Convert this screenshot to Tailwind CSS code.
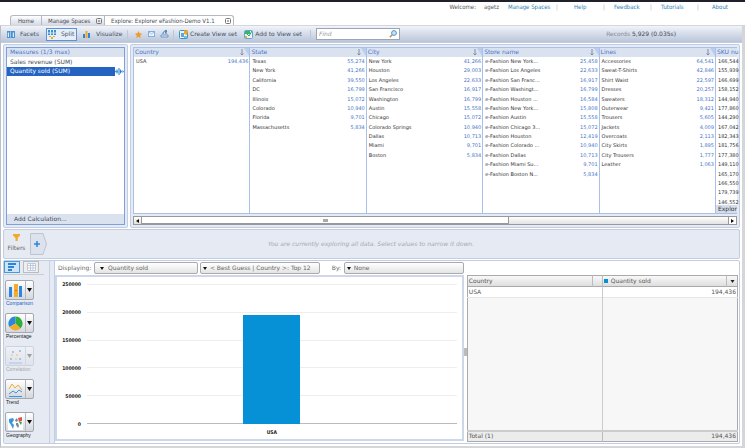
<!DOCTYPE html>
<html lang="en">
<head>
<meta charset="utf-8">
<title>Explorer eFashion-Demo V1.1</title>
<script src="https://cdn.jsdelivr.net/npm/@tailwindcss/browser@4"></script>
</head>
<body class="flex min-h-screen flex-col bg-white font-['DejaVu_Sans',Verdana,sans-serif] text-[6px] leading-[8px] text-[#444a55]">
<header class="border-t-2 border-[#20202a] font-['DejaVu_Sans_Condensed','DejaVu_Sans',sans-serif]">
  <nav class="flex h-[13px] items-start justify-end pt-[1px] pr-[16px] text-[#2a82b4]">
    <span class="mr-[8px] text-[#555]">Welcome:</span><span class="mr-[9px] text-[#555]">agetz</span>
    <a href="#" class="w-[48px]">Manage Spaces</a><span class="w-[18px] text-[#aaa]">|</span>
    <a href="#" class="w-[29px]">Help</a><span class="w-[11px] text-[#aaa]">|</span>
    <a href="#" class="w-[36px]">Feedback</a><span class="w-[11px] text-[#aaa]">|</span>
    <a href="#" class="w-[36px]">Tutorials</a><span class="w-[15px] text-[#aaa]">|</span>
    <a href="#" class="w-[17px]">About</a>
  </nav>
  <div class="flex h-[10px] items-stretch pl-[10px]" role="tablist">
    <button class="w-[32px] rounded-tl-[3px] border border-b-0 border-[#b4b8c0] bg-linear-to-b from-white to-[#d5dae4]">Home</button>
    <button class="flex w-[63px] items-center justify-between border-t border-r border-[#b4b8c0] bg-linear-to-b from-white to-[#d5dae4] pr-[2px] pl-[6px]">Manage Spaces
      <svg class="h-[6px] w-[6px]" viewBox="0 0 6 6" fill="none" stroke="#777"><rect x=".5" y=".5" width="5" height="5" rx="1"/><path d="M2 2l2 2M4 2l-2 2" stroke-width=".6"/></svg></button>
    <button class="flex w-[129px] items-center justify-between rounded-tr-[3px] border-t border-r border-[#b4b8c0] bg-white pr-[2px] pl-[6px] whitespace-nowrap">Explore: Explorer eFashion-Demo V1.1
      <svg class="h-[6px] w-[6px]" viewBox="0 0 6 6" fill="none" stroke="#777"><rect x=".5" y=".5" width="5" height="5" rx="1"/><path d="M2 2l2 2M4 2l-2 2" stroke-width=".6"/></svg></button>
  </div>
</header>
<main class="flex flex-1 flex-col border-t border-r-[3px] border-b-2 border-l border-[#d4d6da] border-l-[#b9bec8]">
  <div class="flex h-[17px] items-center border-b border-[#c3cbda] bg-linear-to-b from-[#f1f4f9] to-[#b9c5da] pl-[6px] text-[#46505f]">
    <button class="flex w-[39px] items-center gap-[5px]"><svg class="h-[7px] w-[8px]" viewBox="0 0 8 7"><path d="M0 0h8v7H0z" fill="#4a92cc"/><path d="M.8 1.500h1.200V6H.8zM3 .5h.6v6H3zM5.800 1.500H7V6H5.800z" fill="#dcecf8"/></svg>Facets</button>
    <button class="flex h-[13px] w-[31px] items-center gap-[5px] border border-[#5c93d6] bg-[#e6eefa] pl-[1px]"><svg class="h-[9px] w-[8px] shrink-0" viewBox="0 0 8 9"><path d="M0 0h2v5H0zM3 0h2v5H3zM6 0h2v5H6z" fill="#3a8fd0"/><path d="M0 2.500h8v1H0z" fill="#cfe4f5"/><path d="M1 6h2v1H1zM5 6h2v1H5zM3 7h2v2H3z" fill="#f0a830"/></svg>Split</button>
    <button class="flex w-[45px] items-center gap-[6px] pl-[6px]"><svg class="h-[7px] w-[7px] shrink-0" viewBox="0 0 7 7"><path d="M0 3h2v4H0zM5 2h2v5H5z" fill="#2b86d9"/><path d="M2.500 0h2v7h-2z" fill="#f5a623"/></svg>Visualize</button>
    <span class="ml-[5px] h-[9px] w-[1px] bg-[#c0c6d2]"></span>
    <button class="ml-[7px]" aria-label="Favorite"><svg class="h-[7px] w-[7px]" viewBox="0 0 10 10"><path d="M5 0l1.500 3.300L10 3.800 7.500 6.300 8.100 10 5 8.200 1.900 10l.6-3.700L0 3.800l3.500-.5z" fill="#f29a22"/></svg></button>
    <button class="ml-[6px]" aria-label="Mail"><svg class="h-[6px] w-[7px]" viewBox="0 0 7 6"><rect x=".5" y=".5" width="6" height="5" fill="#eef5fd" stroke="#80aee0"/><path d="M1 1l2.500 2L6 1" stroke="#80aee0" fill="none" stroke-width=".8"/></svg></button>
    <button class="ml-[5px]" aria-label="Export"><svg class="h-[8px] w-[9px]" viewBox="0 0 9 8"><path d="M1 5h7v2H1z" fill="#dce9f8" stroke="#5d87bd" stroke-width=".8"/><path d="M3 4c0-2 1-3 3-3M5 0l2 1-2 1.500M6 2v2" stroke="#3873b5" fill="none"/></svg></button>
    <span class="ml-[4px] h-[9px] w-[1px] bg-[#c0c6d2]"></span>
    <button class="ml-[5px] flex items-center gap-[2px]"><svg class="h-[9px] w-[9px]" viewBox="0 0 9 9"><rect x=".5" y=".5" width="8" height="8" rx="1" fill="#e8f5fc" stroke="#3d91c5"/><path d="M2 3h3v4H2z" fill="#58a9d8"/><path d="M5 0l4 1-1 4-3-1z" fill="#f6a623"/><path d="M5 6h3v2H5z" fill="#6fc3dc"/></svg>Create View set</button>
    <button class="ml-[7px] flex items-center gap-[2px]"><svg class="h-[9px] w-[9px]" viewBox="0 0 9 9"><rect x=".5" y=".5" width="8" height="8" rx="1" fill="#e8f5fc" stroke="#5fa6cf"/><path d="M1 1h5v3H1z" fill="#3bb36a"/><path d="M3 4l2 2 3-5" stroke="#2fa35a" fill="none"/><path d="M1 6h2v2H1z" fill="#f6a623"/></svg>Add to View set</button>
    <span class="ml-[8px] h-[9px] w-[1px] bg-[#c0c6d2]"></span>
    <label class="ml-[5px] flex h-[12px] w-[84px] items-center border border-[#9aa5b5] bg-white px-[2px]">
      <input aria-label="Find" placeholder="Find" class="min-w-0 flex-1 italic outline-none placeholder:text-[#999]">
      <svg class="h-[8px] w-[8px]" viewBox="0 0 8 8"><circle cx="5" cy="3" r="2.400" fill="#c6e4fa" stroke="#4a94d2"/><path d="M3.200 4.800L.8 7.200" stroke="#c89047" stroke-width="1.500"/></svg>
    </label>
    <span class="mr-[66px] ml-auto text-[#858b96]">Records <span class="text-[#3f4550]">5,929 (0.035s)</span></span>
  </div>
  <div class="flex flex-1 flex-col gap-[1px] px-[2px] pt-[1px] pb-[2px]">
    <div class="flex h-[184px] gap-[2px]">
      <section class="w-[125px] shrink-0 rounded-[2px] border border-[#c1cde3] bg-[#e6eaf3] p-[2px]">
        <div class="flex h-full flex-col border border-[#7f9fdc] bg-white">
          <h2 class="h-[9px] bg-[#dae2f0] pl-[3px] leading-[7px] text-[#4876c8]">Measures (1/3 max)</h2>
          <button class="h-[9px] pl-[3px] text-left">Sales revenue (SUM)</button>
          <div class="flex h-[10px] items-center"><button class="h-[9px] flex-1 bg-[#2463c2] pl-[3px] text-left text-white">Quantity sold (SUM)</button>
            <svg class="h-[7px] w-[9px]" viewBox="0 0 9 7"><path d="M0 3.500h3M2 1.500v4M4 0v7" stroke="#4a9ad8" stroke-width="1.300"/><path d="M5 1l2 2.500L5 6zM7.500 2L9 3.500 7.500 5z" fill="#2f7cc8"/></svg></div>
          <button class="mt-auto h-[10px] bg-[#dae2f0] pl-[7px] text-left">Add Calculation...</button>
        </div>
      </section>
      <section class="flex min-w-0 flex-1 flex-col rounded-[2px] border border-[#c1cde3] bg-[#e6eaf3] px-[2px] pt-[2px] pb-[2px]">
        <div id="facets" class="grid h-[167px] grid-cols-[repeat(5,minmax(0,1fr))_22px] border-t border-b border-[#a9c0ea] bg-white"></div>
        <div class="mt-auto flex h-[9px] items-stretch border border-[#999] bg-linear-to-b from-white to-[#e2e2e2]">
          <button class="flex w-[8px] items-center justify-center border-r border-[#999]" aria-label="Scroll left"><svg class="h-[4px] w-[3px]" viewBox="0 0 3 4"><path d="M3 0v4L0 2z" fill="#111"/></svg></button>
          <div class="flex w-[61%] items-center justify-center border-r border-b border-[#999] bg-white"><span class="h-[3px] w-[5px] bg-[#aaa]"></span></div>
          <button class="ml-auto flex w-[8px] items-center justify-center border-l border-[#999] bg-white" aria-label="Scroll right"><svg class="h-[4px] w-[3px]" viewBox="0 0 3 4"><path d="M0 0v4l3-2z" fill="#111"/></svg></button>
        </div>
      </section>
    </div>
    <section class="flex h-[30px] items-center rounded-[2px] border border-[#c1cde3] bg-[#e6eaf3]">
      <div class="flex w-[25px] flex-col items-center gap-[3px] pb-[2px]"><svg class="h-[7px] w-[7px]" viewBox="0 0 7 7"><path d="M0 0h7v1.500L4.700 4v3H2.500V4L0 1.500z" fill="#f0ab2c"/></svg><span class="text-[#666]">Filters</span></div>
      <button class="ml-[1px] h-[22px] w-[17px]" aria-label="Add filter"><svg class="h-[22px] w-[17px]" viewBox="0 0 17 22"><path d="M.5.5H13L16.500 11 13 21.500H.5z" fill="#dde2ec" stroke="#bcc4d2"/><path d="M4 11h6M7 8v6" stroke="#2b85d8" stroke-width="1.500"/></svg></button>
      <p class="flex-1 pr-[44px] text-center text-[#a5a9b3] italic">You are currently exploring all data. Select values to narrow it down.</p>
    </section>
    <section class="flex flex-1 rounded-[2px] border border-[#c1cde3]">
      <aside class="flex w-[51px] shrink-0 border-r border-[#c1cde3] bg-[#e6eaf3]">
        <div class="w-[46px] border-r border-[#c9d0df]">
          <div class="mr-[5px] flex h-[14px] gap-[3px] border-b border-[#c9ccd4]">
            <button class="flex h-[12px] w-[16px] items-center justify-center border border-[#4a9ad8] bg-[#cfe5f7]" aria-label="Chart view"><svg class="h-[8px] w-[8px]" viewBox="0 0 8 8"><path d="M0 0h8v2H0zM0 3h6v2H0zM0 6h4v2H0z" fill="#2b86d9"/></svg></button>
            <button class="flex h-[12px] w-[16px] items-center justify-center border border-[#bbb] bg-[#eee]" aria-label="Table view"><svg class="h-[8px] w-[9px]" viewBox="0 0 9 8" fill="#fff" stroke="#a9bad4"><path d="M.5.5h8v7h-8zM.5 2.500h8M3.500.5v7M6 .5v7M.5 5h8" stroke-width=".7"/></svg></button>
          </div>
          <div id="kinds" class="flex flex-col gap-[4px] pt-[5px] pl-[1px] font-['Liberation_Sans_Narrow','Liberation_Sans',Arial,sans-serif] text-[5px] leading-[7px]"></div>
        </div>
      </aside>
      <div class="flex min-w-0 flex-[410] flex-col">
        <div class="flex h-[14px] items-center pl-[3px] text-[#666]">
          <label for="measure" class="w-[36px]">Displaying:</label>
          <div class="relative flex-[104]"><select id="measure" class="h-[12px] w-full appearance-none rounded-[2px] border border-[#aaa] bg-linear-to-b from-white to-[#e4e4e4] pl-[13px]"><option>Quantity sold</option></select><svg class="pointer-events-none absolute top-[5px] left-[6px] h-[3px] w-[4px]" viewBox="0 0 4 3"><path d="M0 0h4L2 3z" fill="#111"/></svg></div>
          <div class="relative ml-[2px] flex-[120]"><select aria-label="Dimension" class="h-[12px] w-full appearance-none rounded-[2px] border border-[#aaa] bg-linear-to-b from-white to-[#e4e4e4] pl-[9px]"><option>&lt; Best Guess | Country &gt;: Top 12</option></select><svg class="pointer-events-none absolute top-[5px] left-[3px] h-[3px] w-[4px]" viewBox="0 0 4 3"><path d="M0 0h4L2 3z" fill="#111"/></svg></div>
          <label for="by" class="w-[24px] pl-[12px]">By:</label>
          <div class="relative flex-[120]"><select id="by" class="h-[12px] w-full appearance-none rounded-[2px] border border-[#aaa] bg-linear-to-b from-white to-[#e4e4e4] pl-[9px]"><option>None</option></select><svg class="pointer-events-none absolute top-[5px] left-[3px] h-[3px] w-[4px]" viewBox="0 0 4 3"><path d="M0 0h4L2 3z" fill="#111"/></svg></div>
        </div>
        <div class="mb-[2px] flex flex-1 border-2 border-[#ccd7ea] pt-[3px] pr-[5px] pb-[3px] pl-[3px] font-['DejaVu_Sans_Condensed','DejaVu_Sans',sans-serif] text-[5px] font-bold text-[#222]">
          <div class="flex w-[27px] flex-col justify-between pr-[6px] pb-[8px] text-right">
            <span>250000</span><span>200000</span><span>150000</span><span>100000</span><span>50000</span><span>0</span>
          </div>
          <div class="flex flex-1 flex-col">
            <div class="relative my-[4px] flex flex-1 justify-center">
              <div class="absolute inset-0 flex flex-col justify-between"><i class="h-[1px] bg-[#eee]"></i><i class="h-[1px] bg-[#eee]"></i><i class="h-[1px] bg-[#eee]"></i><i class="h-[1px] bg-[#eee]"></i><i class="h-[1px] bg-[#eee]"></i><i class="h-[1px] bg-[#bbb]"></i></div>
              <div class="relative w-[57px] self-end bg-[#0690d6]" style="height:77.8%"></div>
            </div>
            <div class="h-[8px] text-center">USA</div>
          </div>
        </div>
      </div>
      <div class="flex w-[3px] items-center"><span class="h-[8px] w-[3px] bg-[#bbb]"></span></div>
      <div class="flex min-w-0 flex-[272] pt-[14px] pr-[1px] pb-[1px]">
        <table class="w-full table-fixed border-collapse border border-[#aaa] bg-[#f7f7f7] text-[#555]">
          <colgroup><col><col class="w-[10px]"><col class="w-[46%]"><col class="w-[11px]"></colgroup>
          <thead><tr class="h-[11px] border-b border-[#aaa] bg-linear-to-b from-[#f9f9f9] to-[#dedede] text-left">
            <th class="border-r border-[#bbb] pl-[1px] font-normal">Country</th><th class="border-r border-[#bbb]"></th>
            <th class="border-r border-[#bbb] pl-[1px] font-normal"><span class="mr-[3px] inline-block h-[4px] w-[4px] bg-[#0690d6]"></span>Quantity sold</th>
            <th><button class="flex w-full justify-center" aria-label="Sort"><svg class="h-[3px] w-[5px]" viewBox="0 0 4 3"><path d="M0 0h4L2 3z" fill="#222"/></svg></button></th></tr></thead>
          <tbody><tr class="h-[11px] border-b border-[#e6e6e6] bg-white"><td colspan="2" class="border-r border-[#ccc] pl-[1px]">USA</td><td colspan="2" class="pr-[1px] text-right">194,436</td></tr>
          <tr><td colspan="2" class="border-r border-[#ccc]"></td><td colspan="2"></td></tr></tbody>
          <tfoot><tr class="h-[11px] border-t-2 border-[#ccc] bg-[#ececec]"><td colspan="2" class="border-r border-[#bbb] pl-[1px]">Total (1)</td><td colspan="2" class="pr-[1px] text-right">194,436</td></tr></tfoot>
        </table>
      </div>
    </section>
  </div>
</main>
<script>
const facets = [
  ['Country', ['USA|194,436']],
  ['State', ['Texas|55,274','New York|41,266','California|39,550','DC|16,799','Illinois|15,072','Colorado|10,940','Florida|9,701','Massachusetts|5,834']],
  ['City', ['New York|41,266','Houston|29,003','Los Angeles|22,633','San Francisco|16,917','Washington|16,799','Austin|15,558','Chicago|15,072','Colorado Springs|10,940','Dallas|10,713','Miami|9,701','Boston|5,834']],
  ['Store name', ['e-Fashion New York...|25,458','e-Fashion Los Angeles|22,633','e-Fashion San Franc...|16,917','e-Fashion Washingt...|16,799','e-Fashion Houston ...|16,584','e-Fashion New York...|15,808','e-Fashion Austin|15,558','e-Fashion Chicago 3...|15,072','e-Fashion Houston|12,419','e-Fashion Colorado ...|10,940','e-Fashion Dallas|10,713','e-Fashion Miami Su...|9,701','e-Fashion Boston N...|5,834']],
  ['Lines', ['Accessories|64,541','Sweat-T-Shirts|42,846','Shirt Waist|22,597','Dresses|20,257','Sweaters|18,312','Outerwear|9,421','Trousers|5,605','Jackets|4,009','Overcoats|2,113','City Skirts|1,895','City Trousers|1,777','Leather|1,063']],
  ['SKU nu', ['166,544','155,939','166,699','158,152','144,940','177,860','144,290','167,042','182,343','181,756','177,380','149,110','165,170','166,550','179,739','146,552']]
];
const sortIcon = '<svg class="h-[8px] w-[9px]" viewBox="0 0 9 8"><path d="M4 0h5v8z" fill="#b9cdee"/><path d="M2 1v6M.5 5.500L2 7l1.500-1.500" fill="none" stroke="#7e8ca3"/></svg>';
document.getElementById('facets').innerHTML = facets.map(([title, rows], i) => `
  <div class="relative flex min-w-0 flex-col border-l border-[#a9c0ea] whitespace-nowrap">
    <h3 class="flex h-[9px] shrink-0 justify-between bg-[#dae2f0] pl-[1px] leading-[7px] text-[#4876c8]">${title}${i < 5 ? sortIcon : ''}</h3>
    <ul class="grid h-[150px] shrink-0 grid-rows-[repeat(16,minmax(0,1fr))] pr-[1px] pl-[2px] text-[5px] leading-[8px] text-[#333]">${rows.map(r => {
      const [name, n] = r.split('|');
      return `<li class="flex justify-between"><span>${name}</span>${n ? `<span class="text-[#4876c8]">${n}</span>` : ''}</li>`;
    }).join('')}</ul>
    ${i === 5 ? '<button class="absolute inset-x-0 bottom-0 h-[8px] bg-[#d5dcea] pl-[2px] text-left text-[#333]">Explor</button>' : ''}
  </div>`).join('');
const kinds = [
  ['Comparison', '<path d="M1 4h3v10H1zM11 3h3v11h-3z" fill="#2b86e0"/><path d="M6 1h4v13H6z" fill="#f2ad2e"/><path d="M7.500 7h1v1h-1z" fill="#c0392b"/>'],
  ['Percentage', '<path d="M7.500 7.500V.5A7 7 0 0 0 1.400 11z" fill="#2b86e0"/><path d="M7.500 7.500V.5a7 7 0 0 1 5 11.900z" fill="#2fae3c"/><path d="M7.500 7.500L1.400 11a7 7 0 0 0 11.100 1.400z" fill="#f2ad2e"/>'],
  ['Correlation', '<path d="M1 14h13" stroke="#2b86e0"/><path d="M2 9h2v2H2zM4 2h2v2H4zM11 9h2v2h-2zM11 1h2v2h-2z" fill="#2b86e0"/><path d="M3 5h2v2H3zM7 9h2v2H7zM8 5h2v2H8z" fill="#f2ad2e"/>'],
  ['Trend', '<path d="M1 7l3-5 3 4 3-3 4 5" fill="none" stroke="#f2ad2e"/><path d="M1 12l4-3 3 2 3-3 3 2M1 14.500h13" fill="none" stroke="#3b94dc"/>'],
  ['Geography', '<path d="M0 0h15v15H0z" fill="#fff"/><path d="M1 4l4-1 1 2-2 3 2 2-1 4-2-4-2-3z" fill="#3b94dc"/><path d="M7 5l2-2 1 3-2 1zM8 8h2l1 3-1 2-2-3z" fill="#789"/><path d="M10 3l4-1v4l-3 1z" fill="#d9534f"/><path d="M11 7h3l-1 3z" fill="#2fae3c"/>']
];
document.getElementById('kinds').innerHTML = kinds.map(([name, art]) => `
  <div class="${name === 'Correlation' ? 'opacity-35' : ''} ${name === 'Comparison' ? 'text-[#2463c2]' : 'text-[#222]'}">
    <button class="flex h-[20px] w-[29px] items-stretch rounded-[2px] border border-[#a5a8ae] bg-linear-to-b from-white to-[#d4d7dd]" aria-label="${name}">
      <span class="flex w-[20px] items-center justify-center border-r border-[#b5b8be]"><svg class="h-[15px] w-[15px]" viewBox="0 0 15 15">${art}</svg></span>
      <span class="flex flex-1 items-center justify-center"><svg class="h-[4px] w-[5px]" viewBox="0 0 5 4"><path d="M0 0h5L2.500 4z" fill="#111"/></svg></span>
    </button>
    <div class="h-[9px] pl-[1px]">${name}</div>
  </div>`).join('');
</script>
</body>
</html>
